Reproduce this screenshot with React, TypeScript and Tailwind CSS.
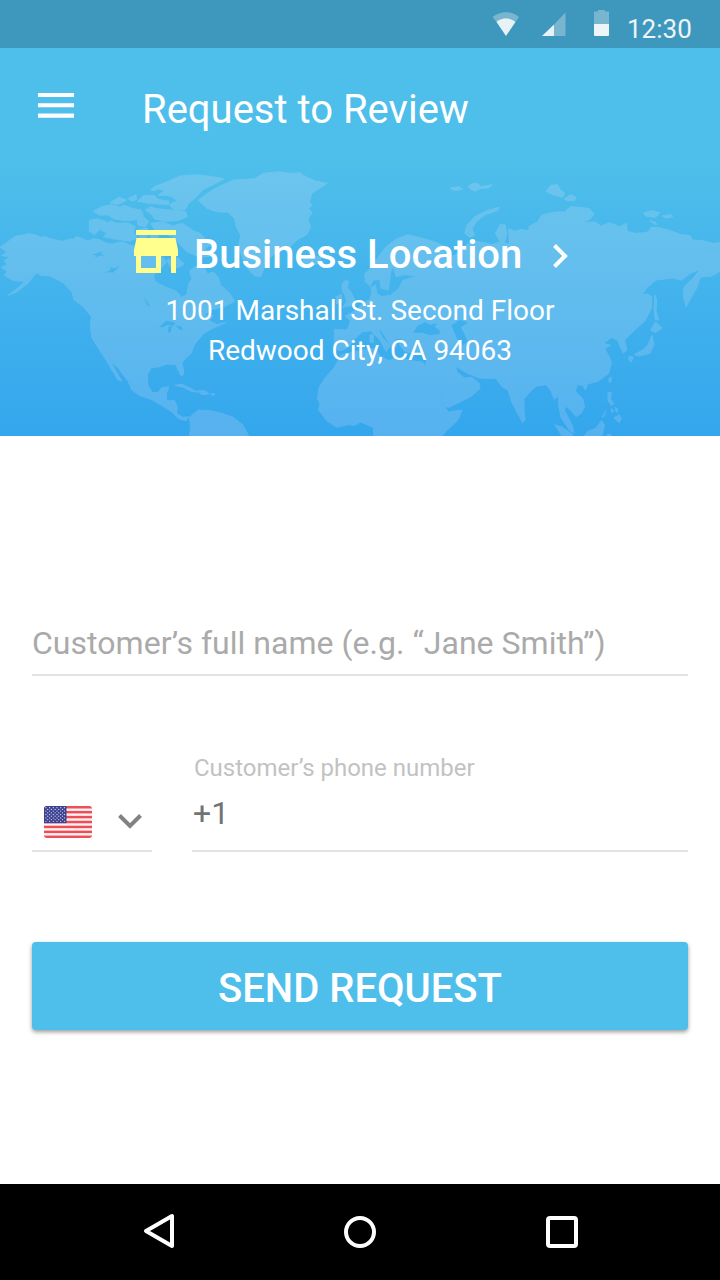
import { useState } from 'react';

const LAND = [
  // North America
  'M0 262L22 246L48 228L66 226L85 221L104 224L122 232L136 230L150 236L188 244L206 238L222 237L228 230L240 233L262 243L282 236L300 240L320 250L338 252L352 247L372 247L386 254L402 257L440 262L462 250L478 262L486 290L500 306L478 330L460 345L466 366L498 382L530 394L544 412L560 404L566 372L576 356L568 334L588 318L612 322L622 342L640 336L654 352L662 376L688 398L704 424L672 440L632 450L610 468L640 466L628 482L652 494L676 488L640 504L612 520L594 540L582 556L574 580L546 606L552 642L544 648L534 630L528 614L500 612L478 620L452 624L442 646L444 676L456 698L474 698L484 684L506 680L500 700L498 720L524 722L532 740L530 760L548 772L566 770L558 782L536 776L516 756L488 738L458 720L418 706L396 690L384 664L356 626L330 602L346 630L366 664L352 658L322 606L300 572L276 534L271 500L274 470L250 440L222 420L216 396L190 368L150 348L122 346L110 338L98 352L84 370L50 396L24 406L58 380L74 364L40 362L12 346L22 334L4 322L22 314L12 302L30 292L4 286L22 276Z',
  // South America
  'M568 772L596 750L630 752L666 760L700 772L730 796L746 828L568 828L572 800Z',
  // Caribbean
  'M524 676L546 672L570 684L592 696L574 694L550 682Z',
  'M592 692L614 692L628 702L606 704Z',
  'M634 701L644 701L644 705L634 705Z',
  // Canadian arctic
  'M452 90L462 80L500 66L540 48L590 44L640 50L672 56L640 74L610 88L590 110L566 130L556 148L520 148L508 134L532 122L516 110L500 106L474 106L494 92L474 86L462 92Z',
  'M412 124L432 106L462 106L474 118L508 124L504 134L480 132L446 130Z',
  'M436 150L452 140L470 146L512 150L556 154L562 170L534 182L494 184L462 176L456 164Z',
  'M280 154L306 140L334 134L360 142L372 136L400 146L424 150L430 166L406 180L372 182L340 176L324 164L300 166Z',
  'M268 182L290 176L318 184L326 196L304 204L284 224L268 214Z',
  'M302 210L330 182L352 190L382 188L406 200L400 216L412 234L390 244L362 240L340 236L310 230L322 220Z',
  'M330 128L356 112L380 120L366 128L352 134Z',
  'M384 116L408 104L410 118L396 124Z',
  'M412 178L430 170L446 184L436 200L414 196Z',
  'M414 208L442 204L446 224L432 240L418 232Z',
  'M452 190L486 186L520 198L546 190L580 212L600 220L616 236L632 256L614 264L634 288L600 292L562 276L542 256L520 230L478 218L462 206Z',
  'M450 214L476 226L470 242L452 236Z',
  'M502 300L530 290L552 312L534 324L510 320Z',
  // Greenland
  'M594 120L632 94L664 76L700 60L764 56L790 40L840 35L870 40L900 38L920 52L950 64L982 70L960 84L936 100L928 126L936 134L926 146L936 158L924 178L932 202L920 224L894 238L868 262L826 280L796 304L788 336L782 350L762 346L740 322L726 290L716 258L722 226L708 198L704 176L684 156L658 156L640 152L620 144Z',
  // Iceland, British Isles
  'M910 298L936 286L962 292L960 308L930 318L912 310Z',
  'M1026 372L1034 362L1046 364L1042 382L1054 398L1066 424L1060 436L1028 442L1040 424L1034 404L1026 390Z',
  'M1008 410L1024 402L1026 424L1010 432Z',
  // Novaya Zemlya and Svalbard
  'M1394 220L1400 196L1424 170L1460 152L1498 142L1492 152L1456 164L1430 184L1416 206L1424 226L1408 232Z',
  'M1350 84L1376 80L1388 88L1364 92Z',
  'M1404 80L1418 70L1432 70L1444 80L1476 74L1466 84L1440 86L1424 94L1412 88Z',
  // Arctic Siberian islands
  'M1638 94L1652 76L1672 74L1684 94L1694 98L1688 112L1662 106Z',
  'M1692 118L1712 104L1728 112L1724 122L1704 122Z',
  'M1930 160L1954 152L1980 158L1966 172L1938 168Z',
  'M1986 168L2012 164L2018 170L1998 174Z',
  'M1950 182L1966 186L1970 194L1960 190Z',
  // Eurasia
  'M1096 366L1094 342L1118 318L1134 292L1158 260L1188 238L1224 224L1262 234L1300 244L1332 258L1352 284L1334 294L1364 286L1384 270L1402 252L1432 244L1476 254L1500 246L1486 220L1500 194L1516 194L1520 226L1512 252L1528 250L1526 206L1544 214L1564 208L1586 212L1588 198L1614 186L1624 166L1664 156L1694 156L1712 140L1742 142L1768 146L1782 162L1770 178L1744 188L1786 186L1802 198L1830 188L1858 200L1880 190L1882 214L1906 220L1934 218L1948 214L1952 202L1974 202L2012 212L2044 224L2070 226L2078 240L2110 242L2138 250L2160 248L2160 334L2136 348L2100 352L2092 380L2074 412L2058 440L2050 408L2052 380L2080 354L2100 328L2072 340L2044 360L2018 354L1968 360L1940 384L1926 404L1944 402L1956 412L1954 446L1934 484L1906 508L1888 526L1874 540L1880 570L1870 580L1860 560L1854 542L1836 532L1824 540L1810 550L1832 556L1814 566L1826 588L1834 608L1826 640L1794 664L1762 672L1756 690L1748 676L1732 674L1726 694L1748 716L1754 740L1744 760L1728 770L1710 748L1696 738L1694 752L1716 794L1722 820L1708 810L1684 774L1676 738L1676 708L1662 718L1654 694L1638 674L1610 678L1594 692L1572 716L1572 754L1576 780L1568 788L1556 766L1536 728L1524 690L1506 680L1488 656L1438 654L1402 640L1366 618L1370 634L1392 654L1416 652L1438 670L1440 686L1412 710L1348 742L1336 740L1322 710L1300 674L1276 622L1280 594L1272 576L1240 580L1214 574L1198 552L1208 534L1184 538L1190 560L1178 564L1160 538L1144 512L1134 506L1148 534L1172 558L1158 574L1140 540L1112 512L1086 516L1062 538L1048 560L1024 572L1002 568L1004 508L1042 510L1052 484L1036 468L1072 448L1088 430L1110 418L1116 390L1108 376Z',
  // Africa
  'M1024 584L1060 576L1100 568L1128 566L1138 586L1166 602L1188 592L1232 602L1268 606L1286 640L1308 688L1332 738L1346 756L1386 750L1374 780L1340 812L1326 828L1122 828L1120 802L1082 786L1064 796L1044 794L1010 802L980 782L956 750L960 732L952 716L958 680L978 650L1002 624Z',
  // Corsica and Sardinia
  'M1110 524L1120 524L1120 548L1110 546Z',
  // Japan and Sakhalin
  'M1964 404L1970 420L1968 452L1976 480L1966 480L1962 450Z',
  'M1966 486L1986 504L1966 518L1952 510Z',
  'M1956 526L1962 554L1950 580L1918 588L1902 584L1928 570L1944 554Z',
  'M1888 588L1900 592L1894 606L1886 598Z',
  // South-east Asia
  'M1828 654L1834 652L1832 668L1826 664Z',
  'M1824 698L1834 696L1832 718L1842 732L1834 736L1824 722Z',
  'M1834 746L1840 750L1838 758L1834 756Z',
  'M1846 742L1854 748L1852 758L1846 752Z',
  'M1814 758L1818 752L1810 770L1806 772Z',
  'M1842 774L1858 764L1864 776L1858 788L1850 782Z',
  'M1664 794L1688 802L1716 822L1720 828L1686 828Z',
  'M1752 828L1766 812L1786 806L1804 782L1814 794L1806 828Z',
  'M1820 826L1830 822L1834 828L1820 828Z',
];

const WATER = [
  // Canadian lakes
  'M276 284L296 278L310 274L302 282L314 286L296 288L284 294L290 286Z',
  'M314 340L330 330L334 320L340 326L358 318L350 328L338 338L326 336Z',
  'M432 412L440 424L452 442L440 434Z',
  'M478 500L500 482L526 488L520 498L502 494L490 502Z',
  'M506 500L516 498L512 518L504 516Z',
  'M528 496L544 500L550 510L536 508Z',
  // Baltic
  'M1174 334L1188 310L1180 330L1188 352L1214 346L1246 348L1208 360L1194 386L1172 404L1144 408L1132 400L1128 374L1110 382L1120 362L1138 360L1142 386L1166 392Z',
  // Black Sea, Caspian
  'M1240 518L1252 498L1276 486L1290 494L1312 490L1304 500L1320 512L1318 522L1290 526L1266 518Z',
  'M1354 496L1380 480L1404 488L1382 502L1392 520L1402 542L1390 556L1374 542Z',
];

function WorldMap() {
  return (
    <svg viewBox="0 0 2160 828" className="absolute bottom-0 left-0 h-[276px] w-[720px]">
      <mask id="land">
        <g fill="#fff" stroke="#fff" strokeWidth="3" strokeLinejoin="round">
          {LAND.map((d) => <path key={d} d={d} />)}
        </g>
        <g fill="#000">
          {WATER.map((d) => <path key={d} d={d} />)}
        </g>
      </mask>
      <rect width="2160" height="828" fill="#ffecfa" fillOpacity="0.17" mask="url(#land)" />
    </svg>
  );
}

function StatusBar() {
  return (
    <div className="flex h-12 items-start bg-[#3e97bc] pl-[492px]">
      <svg width="126" height="48" viewBox="0 0 126 48" fill="#fff">
        <path opacity="0.3" d="M0.5 17C8 10.500 20 10.500 27 17L23.500 22C18 17 10 17 4.500 22Z" />
        <path opacity="0.88" d="M4.500 22C10 17 18 17 23.500 22L14 36Z" />
        <path opacity="0.3" d="M62 24.500L73.500 12.500V36H62Z" />
        <path opacity="0.88" d="M50 36L62 24.500V36Z" />
        <path opacity="0.3" d="M102 11.500H106V10H113V11.500H117V24H102Z" />
        <path opacity="0.9" d="M102 24H117V35A1 1 0 0 1 116 36H103A1 1 0 0 1 102 35Z" />
      </svg>
      <span className="ml-[9px] mt-[13px] text-[26px] leading-8 text-white/90">12:30</span>
    </div>
  );
}

function Flag() {
  const stars = Array.from({ length: 9 }, (_, row) =>
    Array.from({ length: row % 2 ? 5 : 6 }, (_, col) => ({
      x: (row % 2 ? 3.7 : 1.9) + col * 3.7,
      y: 1.7 + row * 1.7,
    })),
  ).flat();

  return (
    <svg width="48" height="32" viewBox="0 0 48 32">
      <clipPath id="flag">
        <rect width="48" height="32" rx="3" />
      </clipPath>
      <g clipPath="url(#flag)">
        <rect width="48" height="32" fill="#fdf3f3" />
        {[0, 1, 2, 3, 4, 5, 6].map((i) => (
          <rect key={i} y={i * 4.92} width="48" height="2.5" fill="#ee4f57" />
        ))}
        <rect width="22.5" height="17.2" fill="#3c4191" />
        {stars.map((s) => (
          <circle key={`${s.x}-${s.y}`} cx={s.x} cy={s.y} r="0.65" fill="#d5d8ee" />
        ))}
      </g>
    </svg>
  );
}

export default function App() {
  const [name, setName] = useState('');
  const [phone, setPhone] = useState('+1');

  return (
    <div className="flex h-[1280px] w-[720px] flex-col overflow-hidden bg-white font-['Roboto',sans-serif]">
      <StatusBar />

      {/* Header */}
      <header className="relative h-[388px] bg-linear-to-b from-[#4ebeeb] from-30% to-[#34a6ed] text-white">
        <WorldMap />
        <div className="relative flex h-[122px] items-center pl-[38px]">
          <button aria-label="Menu" className="mb-[7px]">
            <svg width="36" height="26" viewBox="0 0 36 26" fill="#fff">
              <path d="M0 0H36V4H0ZM0 10.3H36V14.3H0ZM0 20.500H36V24.700H0Z" />
            </svg>
          </button>
          <h1 className="ml-[68px] mt-[2px] text-[40px] leading-[48px]">Request to Review</h1>
        </div>

        {/* Location */}
        <div className="relative">
          <button className="mt-[60px] flex h-12 items-center pl-[134px]">
            <svg width="44" height="43" viewBox="0 0 44 43" fill="#ffff8d" className="mb-[6px]">
              <path d="M2 0H42V5H2Z" />
              <path fillRule="evenodd" d="M2.500 8H41.500L44 20V26H42V43H37V26H27V43H2V26H0V20ZM7 26V38H22V26Z" />
            </svg>
            <span className="ml-4 mt-[2px] text-[40px] font-medium leading-[48px]">Business Location</span>
            <svg width="16" height="24" viewBox="0 0 16 24" className="ml-[31px] mt-1" fill="none" stroke="#fff" strokeWidth="4">
              <path d="M1.500 1.500L12 12L1.500 22.500" />
            </svg>
          </button>
          <p className="mt-[13px] text-center text-[28px] leading-10">
            1001 Marshall St. Second Floor
            <br />
            Redwood City, CA 94063
          </p>
        </div>
      </header>

      {/* Form */}
      <main className="flex flex-1 flex-col px-8 pt-[182px]">
        <input
          value={name}
          onChange={(e) => setName(e.target.value)}
          placeholder="Customer’s full name (e.g. “Jane Smith”)"
          className="h-[58px] border-b-2 border-[#e3e3e3] pb-[6px] text-[32px] tracking-[0.03px] outline-none placeholder:text-[#aaaaaa]"
        />

        <div className="mt-[76px] flex h-[100px] gap-10">
          <button aria-label="Country" className="flex w-[120px] items-end border-b-2 border-[#e3e3e3] pb-3 pl-3">
            <Flag />
            <svg width="24" height="16" viewBox="0 0 24 16" className="mb-2 ml-[26px]" fill="none" stroke="#828282" strokeWidth="4">
              <path d="M1.500 1.500L12 12L22.500 1.500" />
            </svg>
          </button>
          <label className="flex flex-1 flex-col border-b-2 border-[#e3e3e3]">
            <span className="pl-[2px] text-2xl text-[#c2c2c2]">Customer’s phone number</span>
            <input
              value={phone}
              onChange={(e) => setPhone(e.target.value)}
              className="mt-[9px] h-10 pl-px text-[32px] text-[#737373] outline-none"
            />
          </label>
        </div>

        <button className="mt-[90px] h-[88px] rounded-[4px] bg-[#4ebeeb] pt-[6px] text-[40px] font-medium text-white shadow-[0_2px_4px_rgba(0,0,0,0.4)]">
          SEND REQUEST
        </button>
      </main>

      {/* Navigation bar */}
      <nav className="flex h-24 items-center justify-between bg-black pl-[143px] pr-[142px]">
        <svg width="32" height="36" viewBox="0 0 32 36" className="mb-[2px]" fill="none" stroke="#fff" strokeWidth="4" strokeLinejoin="round">
          <path d="M29 3V33L3 18Z" />
        </svg>
        <span className="mr-px size-8 rounded-full border-4 border-white" />
        <span className="size-8 rounded-[4px] border-4 border-white" />
      </nav>
    </div>
  );
}
